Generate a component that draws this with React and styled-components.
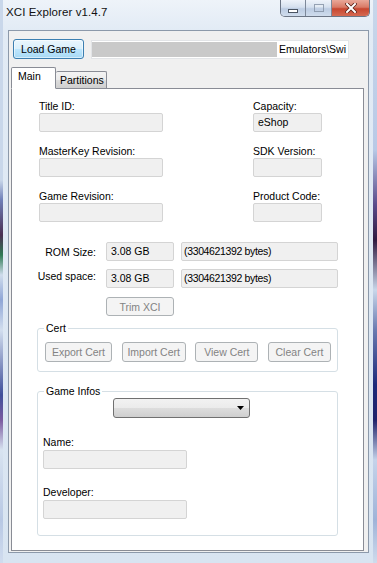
import React from 'react';
import styled, { createGlobalStyle } from 'styled-components';

const GlobalStyle = createGlobalStyle`
  html, body { margin: 0; padding: 0; width: 377px; height: 563px; overflow: hidden; background: #dfe9f3; }
  * { box-sizing: border-box; }
  #root { width: 377px; height: 563px; }
`;

const Window = styled.div`
  width: 377px;
  height: 563px;
  display: flex;
  flex-direction: column;
  padding: 0 8px 10px 8px;
  font-family: "Liberation Sans", Arial, sans-serif;
  background:
    linear-gradient(to bottom, #c9d7ea 0, #c9d7ea 180px, #6f7fb8 200px, #4a2f52 235px, #2f7a55 255px, #cfdcec 275px, #8fa6d6 300px, #d2deee 330px, #3f4f9a 395px, #7a5aa0 420px, #d8e3f0 450px, #b8c8e4 520px, #d0dcee 563px) left top / 3px 100% no-repeat,
    linear-gradient(to bottom, #c9d7ea 0, #b8c9e6 150px, #5a4a8a 205px, #301a40 240px, #c9d7ea 290px, #6a7ab0 330px, #1d2a7a 385px, #20226a 420px, #c5d3ea 460px, #9fb3d8 520px, #cfdbec 563px) right top / 4px 100% no-repeat,
    linear-gradient(to bottom, #eef3f9 0, #e2ebf5 30px, #d8e4f1 100%);
`;

const TitleBar = styled.div`
  height: 30px;
  display: flex;
  align-items: flex-start;
  justify-content: space-between;
  margin-left: -2px;
`;

const Title = styled.div`
  font-size: 11.5px;
  color: #111;
  padding-top: 6px;
  letter-spacing: 0.1px;
`;

const CaptionGroup = styled.div`
  display: flex;
  height: 17px;
  border: 1px solid #6b7585;
  border-top: none;
  border-radius: 0 0 5px 5px;
  overflow: hidden;
  margin-right: -1px;
`;

const CaptionButton = styled.div`
  width: ${p => p.$w}px;
  display: flex;
  align-items: center;
  justify-content: center;
  border-left: ${p => (p.$first ? 'none' : '1px solid #7d8899')};
  background: ${p =>
    p.$close
      ? 'linear-gradient(to bottom, #e9a899 0, #d97a66 45%, #c7462f 55%, #d56a52 100%)'
      : 'linear-gradient(to bottom, #eef3fa 0, #d5e0ee 45%, #bccce2 55%, #cfdcec 100%)'};
`;

const MinGlyph = styled.span`
  width: 10px;
  height: 4px;
  margin-top: 5px;
  background: #fff;
  border: 1px solid #4a5462;
`;

const MaxGlyph = styled.span`
  width: 10px;
  height: 8px;
  background: transparent;
  border: 1px solid #8390a3;
  box-shadow: inset 0 2px 0 #e8eef6;
  opacity: 0.8;
`;

const Client = styled.div`
  flex: 1;
  background: #f0f0f0;
  border: 1px solid #8c99aa;
  padding: 8px 4px 1px 2px;
  display: flex;
  flex-direction: column;
  font-size: 10.5px;
`;

const TopRow = styled.div`
  display: flex;
  align-items: center;
  gap: 7px;
  margin-left: 2px;
  height: 20px;
`;

const LoadButton = styled.button`
  width: 71px;
  height: 20px;
  padding: 0;
  border: 1px solid #3c7fb1;
  border-radius: 3px;
  background: linear-gradient(to bottom, #eaf6fd 0, #d9f0fc 50%, #bee6fd 51%, #a7d9f5 100%);
  box-shadow: inset 0 0 0 1px rgba(255, 255, 255, 0.55);
  font-family: inherit;
  font-size: 10.5px;
  color: #000;
`;

const PathField = styled.div`
  width: 258px;
  height: 19px;
  display: flex;
  align-items: stretch;
  background: #fff;
  border: 1px solid #e2e4e7;
  padding: 0 2px 0 0;
  line-height: 17px;
`;

const Redacted = styled.span`
  flex: 1;
  background: #c9c9c9;
  margin: 1px 0 1px 0;
`;

const PathText = styled.span`
  padding-left: 2px;
  white-space: nowrap;
`;

const TabStrip = styled.div`
  display: flex;
  align-items: flex-end;
  margin-top: 8px;
  height: 21px;
  position: relative;
  z-index: 1;
`;

const Tab = styled.div`
  width: ${p => p.$w}px;
  height: ${p => (p.$active ? 22 : 17)}px;
  border: 1px solid #898c95;
  border-bottom: ${p => (p.$active ? '1px solid #fff' : 'none')};
  border-left: ${p => (p.$noLeft ? 'none' : '1px solid #898c95')};
  border-radius: 2px 2px 0 0;
  background: ${p => (p.$active ? '#fff' : 'linear-gradient(to bottom, #f3f3f3 0, #ebebeb 50%, #dddddd 51%, #cfcfcf 100%)')};
  line-height: ${p => (p.$active ? 17 : 16)}px;
  padding-left: ${p => (p.$active ? 6 : 4)}px;
  margin-bottom: ${p => (p.$active ? -1 : 0)}px;
`;

const Panel = styled.div`
  flex: 1;
  background: #fff;
  border: 1px solid #898c95;
  padding-top: 10px;
  display: flex;
  flex-direction: column;
`;

const InfoGrid = styled.div`
  display: grid;
  grid-template-columns: 124px 69px;
  column-gap: 90px;
  row-gap: 12px;
  margin-left: 27px;
`;

const Field = styled.div`
  display: flex;
  flex-direction: column;
`;

const Label = styled.div`
  line-height: ${p => p.$lh || 14}px;
  height: ${p => p.$lh || 14}px;
  color: #000;
  white-space: nowrap;
`;

const Box = styled.div`
  width: ${p => (p.$w ? `${p.$w}px` : '100%')};
  height: 19px;
  background: #f0f0f0;
  border: 1px solid #d4d4d4;
  border-radius: 2px;
  line-height: 17px;
  padding-left: ${p => (p.$pl !== undefined ? p.$pl : 4)}px;
  letter-spacing: ${p => (p.$tight ? '-0.35px' : 'normal')};
  color: #000;
  white-space: nowrap;
`;

const SizeGrid = styled.div`
  display: grid;
  grid-template-columns: 84px 68px 157px;
  column-gap: 10px;
  row-gap: 8px;
  margin-top: 20px;
  align-items: center;
  & > :nth-child(3n + 3) { margin-left: -3px; }
`;

const SizeLabel = styled.div`
  text-align: right;
  white-space: nowrap;
  margin-top: ${p => (p.$up ? -5 : 0)}px;
`;

const DisabledButton = styled.button`
  width: ${p => p.$w}px;
  height: ${p => p.$h || 20}px;
  padding: 0;
  border: 1px solid #adb2b5;
  border-radius: 3px;
  background: #f4f4f4;
  color: #838383;
  font-family: inherit;
  font-size: 10.5px;
  white-space: nowrap;
`;

const TrimRow = styled.div`
  margin: 9px 0 0 94px;
`;

const Group = styled.fieldset`
  margin: ${p => p.$mt}px 0 0 25px;
  width: 301px;
  min-width: 0;
  border: 1px solid #d5dfe5;
  border-radius: 3px;
  padding: 0 6px ${p => p.$pb}px 6px;
`;

const Legend = styled.legend`
  line-height: 14px;
  padding: 0 2px;
  color: #000;
`;

const CertRow = styled.div`
  display: flex;
  justify-content: space-between;
  margin: 7px 0 0 1px;
`;

const Combo = styled.div`
  width: 137px;
  height: 20px;
  margin-left: 69px;
  border: 1px solid #707070;
  border-radius: 3px;
  background: linear-gradient(to bottom, #f2f2f2 0, #ebebeb 50%, #dddddd 51%, #cfcfcf 100%);
  display: flex;
  align-items: center;
  justify-content: flex-end;
  padding-right: 5px;
`;

const GameField = styled.div`
  display: flex;
  flex-direction: column;
  margin: ${p => p.$mt}px 0 0 -1px;
`;

export default function App() {
  return (
    <>
      <GlobalStyle />
      <Window>
        <TitleBar>
          <Title>XCI Explorer v1.4.7</Title>
          <CaptionGroup>
            <CaptionButton $w={24} $first>
              <MinGlyph />
            </CaptionButton>
            <CaptionButton $w={26}>
              <MaxGlyph />
            </CaptionButton>
            <CaptionButton $w={38} $close>
              <svg width="12" height="10" viewBox="0 0 12 10">
                <path d="M2 1 L10 9 M10 1 L2 9" stroke="#5a2218" strokeWidth="3.6" strokeLinecap="square" />
                <path d="M2 1 L10 9 M10 1 L2 9" stroke="#ffffff" strokeWidth="2" strokeLinecap="square" />
              </svg>
            </CaptionButton>
          </CaptionGroup>
        </TitleBar>
        <Client>
          <TopRow>
            <LoadButton>Load Game</LoadButton>
            <PathField>
              <Redacted />
              <PathText>Emulators\Swi</PathText>
            </PathField>
          </TopRow>
          <TabStrip>
            <Tab $w={45} $active>Main</Tab>
            <Tab $w={51} $noLeft>Partitions</Tab>
          </TabStrip>
          <Panel>
            <InfoGrid>
              <Field>
                <Label>Title ID:</Label>
                <Box />
              </Field>
              <Field>
                <Label>Capacity:</Label>
                <Box>eShop</Box>
              </Field>
              <Field>
                <Label>MasterKey Revision:</Label>
                <Box />
              </Field>
              <Field>
                <Label>SDK Version:</Label>
                <Box />
              </Field>
              <Field>
                <Label>Game Revision:</Label>
                <Box />
              </Field>
              <Field>
                <Label>Product Code:</Label>
                <Box />
              </Field>
            </InfoGrid>
            <SizeGrid>
              <SizeLabel>ROM Size:</SizeLabel>
              <Box>3.08 GB</Box>
              <Box $pl={2} $tight>(3304621392 bytes)</Box>
              <SizeLabel $up>Used space:</SizeLabel>
              <Box>3.08 GB</Box>
              <Box $pl={2} $tight>(3304621392 bytes)</Box>
            </SizeGrid>
            <TrimRow>
              <DisabledButton $w={68} $h={19}>Trim XCI</DisabledButton>
            </TrimRow>
            <Group $mt={5} $pb={9}>
              <Legend>Cert</Legend>
              <CertRow>
                <DisabledButton $w={67}>Export Cert</DisabledButton>
                <DisabledButton $w={64}>Import Cert</DisabledButton>
                <DisabledButton $w={63}>View Cert</DisabledButton>
                <DisabledButton $w={63}>Clear Cert</DisabledButton>
              </CertRow>
            </Group>
            <Group $mt={12} $pb={16}>
              <Legend>Game Infos</Legend>
              <Combo>
                <svg width="7" height="4" viewBox="0 0 7 4">
                  <polygon points="0,0 7,0 3.5,4" fill="#000" />
                </svg>
              </Combo>
              <GameField $mt={17}>
                <Label $lh={15}>Name:</Label>
                <Box $w={144} />
              </GameField>
              <GameField $mt={16}>
                <Label $lh={15}>Developer:</Label>
                <Box $w={144} />
              </GameField>
            </Group>
          </Panel>
        </Client>
      </Window>
    </>
  );
}
